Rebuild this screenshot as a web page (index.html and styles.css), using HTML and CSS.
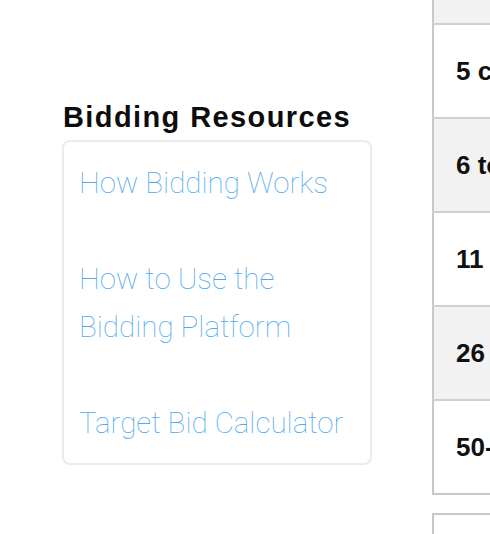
FILE: index.html
```html
<!DOCTYPE html>
<html lang="en">
<head>
<meta charset="utf-8">
<title>Bidding Resources</title>
<link rel="stylesheet" href="styles.css">
</head>
<body>
<div class="page">
  <aside class="sidebar">
    <h2 class="heading">Bidding Resources</h2>
    <div class="resources">
      <ul class="links">
        <li><a href="#">How Bidding Works</a></li>
        <li><a href="#">How to Use the<br>Bidding Platform</a></li>
        <li><a href="#">Target Bid Calculator</a></li>
      </ul>
    </div>
  </aside>
  <section class="content">
    <table class="tiers">
      <tbody>
        <tr class="row-alt row-partial"><td></td></tr>
        <tr><td>5 cars or fewer</td></tr>
        <tr class="row-alt"><td>6 to 10</td></tr>
        <tr><td>11 to 25</td></tr>
        <tr class="row-alt"><td>26 to 49</td></tr>
        <tr><td>50-99</td></tr>
      </tbody>
    </table>
    <div class="next-box"></div>
  </section>
</div>
</body>
</html>
```

FILE: styles.css
```css
html, body {
  margin: 0;
  padding: 0;
  background: #ffffff;
}

body {
  font-family: "Liberation Sans", Arial, Helvetica, sans-serif;
  color: #111111;
}

.page {
  display: flex;
  width: 490px;
  height: 534px;
  overflow: hidden;
}

.sidebar {
  flex: 0 0 310px;
  margin-left: 62px;
  padding-top: 99px;
}

.heading {
  margin: 0 0 5px 1px;
  font-size: 29px;
  line-height: 36px;
  font-weight: 700;
  letter-spacing: 1.4px;
  color: #0d0d0d;
  white-space: nowrap;
}

.resources {
  border: 2px solid #ebebeb;
  border-radius: 8px;
  padding: 17px 16px 16px 15px;
}

.links {
  list-style: none;
  margin: 0;
  padding: 0;
  display: flex;
  flex-direction: column;
  gap: 48px;
}

.links a {
  display: block;
  font-family: Roboto, "Liberation Sans", sans-serif;
  font-weight: 100;
  font-size: 29.5px;
  line-height: 48px;
  color: #4fa9ec;
  text-decoration: none;
  white-space: nowrap;
}

.content {
  flex: 0 0 auto;
  margin-left: 60px;
  width: 300px;
}

.tiers {
  border-collapse: collapse;
  width: 300px;
  border-left: 2px solid #c8c8c8;
  border-bottom: 2px solid #c8c8c8;
}

.tiers tr {
  height: 94px;
  border-top: 2px solid #d0d0d0;
}

.tiers tr.row-partial {
  height: 24px;
  border-top: none;
}

.tiers tr.row-alt {
  background: #f2f2f2;
}

.tiers td {
  padding: 0 0 0 22px;
  font-size: 26px;
  font-weight: 700;
  color: #111111;
  white-space: nowrap;
  vertical-align: middle;
}

.next-box {
  margin-top: 18px;
  height: 60px;
  border: 2px solid #c8c8c8;
  border-right: none;
}
```
